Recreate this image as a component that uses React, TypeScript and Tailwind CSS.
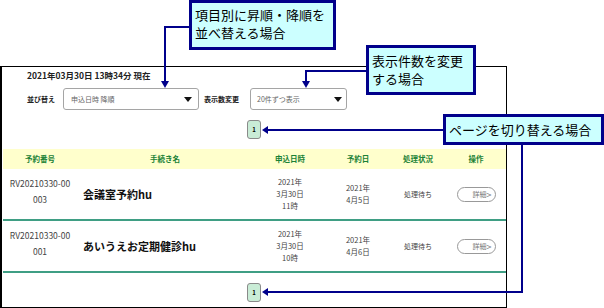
import React from 'react';

type Row = {
  no: string[];
  name: string;
  applied: string[];
  date: string[];
  status: string;
};

const rows: Row[] = [
  { no: ['RV20210330-00', '003'], name: '会議室予約hu', applied: ['2021年', '3月30日', '11時'], date: ['2021年', '4月5日'], status: '処理待ち' },
  { no: ['RV20210330-00', '001'], name: 'あいうえお定期健診hu', applied: ['2021年', '3月30日', '10時'], date: ['2021年', '4月6日'], status: '処理待ち' },
];

function Pager() {
  return (
    <div className="mt-[10px] self-center w-[14px] h-[19px] rounded-[3px] border border-[#8a8a8a] bg-[#c9ecd6] flex items-center justify-center text-[6px] font-bold text-black">
      1
    </div>
  );
}

function Caret() {
  return (
    <svg width="8" height="5" viewBox="0 0 8 5">
      <polygon points="0,0 8,0 4,5" fill="#111" />
    </svg>
  );
}

export default function App() {
  return (
    <div className="relative w-[604px] h-[308px] overflow-hidden bg-white font-['Noto_Sans_CJK_JP',sans-serif] text-[#333]">
      {/* screen capture frame */}
      <div className="mt-[66px] w-[507px] h-[242px] border border-l-2 border-black flex flex-col">
        <div className="pt-[2px] pl-[25px] text-[8.5px] font-bold leading-[12px] text-[#222]">
          2021年03月30日 13時34分 現在
        </div>

        <div className="mt-[7px] pl-[25px] h-[22px] flex items-center">
          <span className="w-[36px] text-[7px] font-bold text-[#222]">並び替え</span>
          <div className="w-[136px] h-[22px] rounded-[3px] border border-[#a5a5a5] flex items-center justify-between pl-[7px] pr-[6px]">
            <span className="text-[7px] text-[#666]">申込日時 降順</span>
            <Caret />
          </div>
          <span className="ml-[5px] w-[46px] text-[7px] font-bold text-[#222]">表示数変更</span>
          <div className="w-[97px] h-[22px] rounded-[3px] border border-[#a5a5a5] flex items-center justify-between pl-[6px] pr-[4px]">
            <span className="text-[7px] text-[#666]">20件ずつ表示</span>
            <Caret />
          </div>
        </div>

        <Pager />

        <div className="mt-[10px] ml-[1px] grid grid-cols-[74px_176px_74px_62px_58px_58px] h-[20px] items-center bg-[#ffffcc] text-center text-[7.5px] font-bold text-[#1a8236]">
          <span>予約番号</span>
          <span>手続き名</span>
          <span>申込日時</span>
          <span>予約日</span>
          <span>処理状況</span>
          <span>操作</span>
        </div>

        {rows.map(r => (
          <div
            key={r.no[1]}
            className="ml-[1px] grid grid-cols-[74px_176px_74px_62px_58px_58px] h-[52px] border-b-2 border-[#3f9e84] items-center text-center"
          >
            <div className="flex flex-col items-center pb-[7px] text-[8.5px] leading-[16px] text-[#444]">
              {r.no.map(t => <span key={t}>{t}</span>)}
            </div>
            <div className="pl-[6px] text-left text-[11px] font-bold leading-[14px] text-[#111]">{r.name}</div>
            <div className="flex flex-col items-center text-[7.5px] leading-[12px] text-[#444]">
              {r.applied.map(t => <span key={t}>{t}</span>)}
            </div>
            <div className="flex flex-col items-center text-[7.5px] leading-[12px] text-[#444]">
              {r.date.map(t => <span key={t}>{t}</span>)}
            </div>
            <div className="text-[7px] text-[#444]">{r.status}</div>
            <div className="flex justify-center">
              <div className="w-[39px] h-[15px] rounded-full border border-[#999] flex items-center justify-end pr-[3px] text-[7px] leading-none text-[#777]">
                詳細<span className="text-[9px]">&gt;</span>
              </div>
            </div>
          </div>
        ))}

        <Pager />
      </div>

      {/* annotation arrows */}
      <svg className="absolute inset-0 pointer-events-none" width="604" height="308">
        <g stroke="#00008b" strokeWidth="2" fill="none">
          <polyline points="189,27 165,27 165,82" />
          <polyline points="366,71 306,71 306,82" />
          <polyline points="443,130 267,130" />
          <polyline points="522,145 522,292 267,292" />
        </g>
        <g fill="#00008b">
          <polygon points="161,81 169,81 165,88" />
          <polygon points="302,81 310,81 306,88" />
          <polygon points="268,126 268,134 262,130" />
          <polygon points="268,288 268,296 262,292" />
        </g>
      </svg>

      {/* callouts */}
      <div className="absolute left-[189px] top-0 w-[147px] h-[50px] border-[3px] border-[#00008b] bg-[#ccffff] pl-[3px] pt-[3px] text-[13px] leading-[18px] text-black">
        <div>項目別に昇順・降順を</div>
        <div>並べ替える場合</div>
      </div>
      <div className="absolute left-[366px] top-[45px] w-[110px] h-[50px] border-[3px] border-[#00008b] bg-[#ccffff] pl-[3px] pt-[4px] text-[13px] leading-[18px] text-black">
        <div>表示件数を変更</div>
        <div>する場合</div>
      </div>
      <div className="absolute left-[443px] top-[114px] w-[161px] h-[31px] border-[3px] border-[#00008b] bg-[#ccffff] pl-[3px] pt-[3px] text-[13px] leading-[19px] text-black">
        ページを切り替える場合
      </div>
    </div>
  );
}
